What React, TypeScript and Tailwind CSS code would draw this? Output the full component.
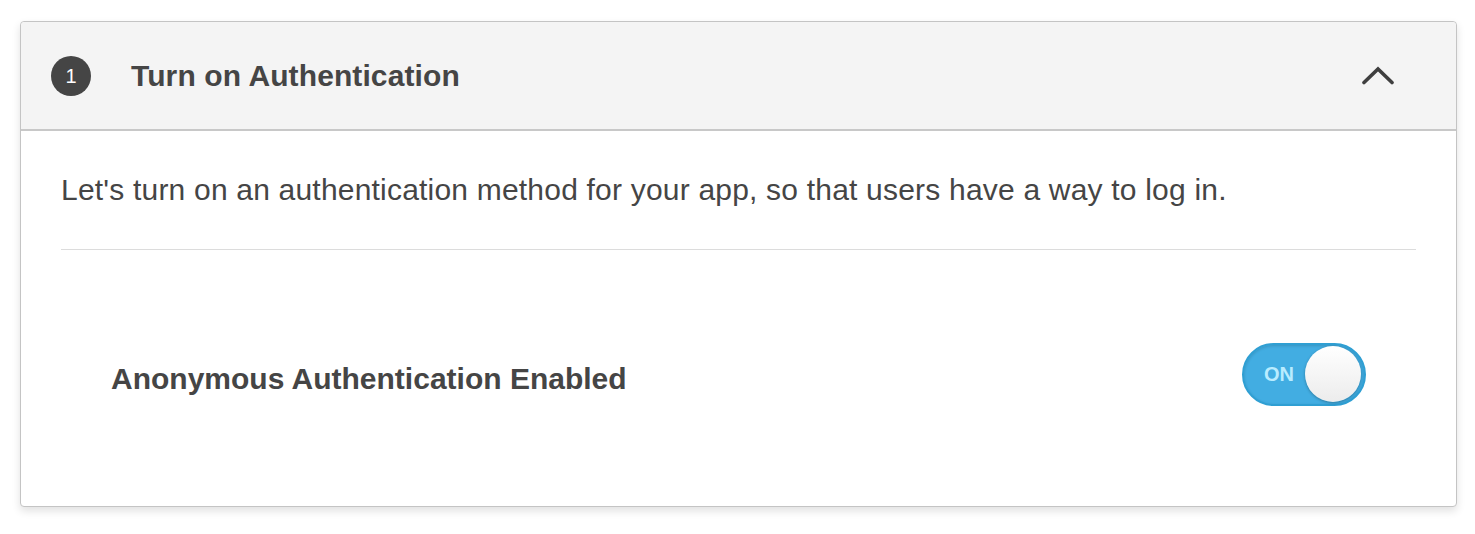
import React, { useState } from 'react';

export default function App() {
  const [enabled, setEnabled] = useState(true);
  const [open, setOpen] = useState(true);

  return (
    <div className="min-h-screen bg-white pt-[21px] pl-[20px] pr-[18px] font-[Liberation_Sans,Arial,sans-serif] text-[#454545]">
      <div className="rounded-[4px] border border-[#c4c4c4] bg-white shadow-[0_4px_8px_rgba(0,0,0,0.12)]">
        {/* 헤더 */}
        <div
          className="flex h-[109px] items-center rounded-t-[4px] border-b-2 border-[#c8c8c8] bg-[#f4f4f4] pl-[30px] pr-[62px] cursor-pointer"
          onClick={() => setOpen(!open)}
        >
          <div className="flex h-[40px] w-[40px] items-center justify-center rounded-full bg-[#454545] text-[20px] text-white">
            1
          </div>
          <div className="ml-[40px] text-[30px] font-bold tracking-[0.1px]">Turn on Authentication</div>
          <div className="ml-auto">
            <svg width="32" height="20" viewBox="0 0 32 20" fill="none">
              <path d="M2 16.5 L16 3 L30 16.5" stroke="#3f3f3f" strokeWidth="3.6" strokeLinecap="round" strokeLinejoin="miter" />
            </svg>
          </div>
        </div>

        {/* 본문 */}
        {open && (
          <div className="px-[40px]">
            <p className="pt-[41px] pb-[41px] text-[30px] leading-[36px] tracking-[0.2px]">
              Let's turn on an authentication method for your app, so that users have a way to log in.
            </p>
            <div className="h-px bg-[#dcdcdc]" />
            <div className="flex h-[256px] items-center justify-between pl-[50px] pr-[50px] pt-[1px]">
              <span className="text-[30px] font-bold">Anonymous Authentication Enabled</span>
              <button
                onClick={() => setEnabled(!enabled)}
                className={`mb-[9px] flex h-[63px] w-[124px] items-center rounded-full border-2 border-[#2f9fd3] bg-[#42ade2] p-[3px] shadow-[inset_0_1px_3px_rgba(0,0,0,0.15)] ${enabled ? 'justify-end' : 'justify-start'}`}
              >
                {enabled && (
                  <span className="mr-auto pl-[17px] text-[20px] font-bold text-[#b9ecff]">ON</span>
                )}
                <span className="h-[56px] w-[56px] rounded-full bg-gradient-to-b from-white to-[#ececec] shadow-[0_1px_3px_rgba(0,0,0,0.3)]" />
              </button>
            </div>
          </div>
        )}
      </div>
    </div>
  );
}
